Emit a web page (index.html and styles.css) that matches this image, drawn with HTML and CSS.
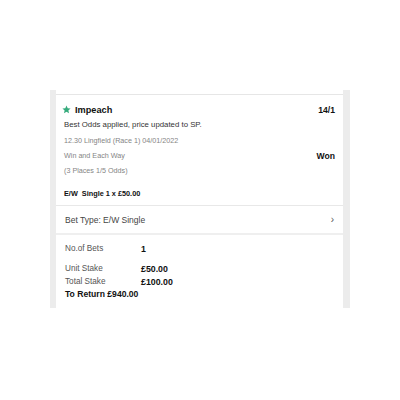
FILE: index.html
```html
<!DOCTYPE html>
<html lang="en">
<head>
  <meta charset="UTF-8" />
  <title>Bet Receipt</title>
  <link rel="stylesheet" href="styles.css">
</head>
<body>
  <div class="frame">
    <div class="card">
      <div class="cap"></div>

      <div class="selection">
        <div class="row title-row">
          <span class="runner">
            <svg class="star" width="9" height="9" viewBox="0 0 24 24"><path d="M12 1.5l3.2 7.1 7.6.7-5.8 5.1 1.8 7.6L12 18l-6.8 4 1.8-7.6L1.2 9.3l7.6-.7z" fill="#35ab7c"/></svg>
            Impeach
          </span>
          <span class="odds">14/1</span>
        </div>
        <div class="row message">Best Odds applied, price updated to SP.</div>
        <div class="row meta">12.30 Lingfield (Race 1) 04/01/2022</div>
        <div class="row meta market">
          <span>Win and Each Way</span>
          <span class="result">Won</span>
        </div>
        <div class="row meta">(3 Places 1/5 Odds)</div>
        <div class="row stake-line">E/W&nbsp; Single 1 x £50.00</div>
      </div>

      <div class="bet-type">
        <span>Bet Type: E/W Single</span>
        <span class="chevron">&#8250;</span>
      </div>

      <div class="summary">
        <div class="pair first"><span class="label">No.of Bets</span><span class="value">1</span></div>
        <div class="pair gap"><span class="label">Unit Stake</span><span class="value">£50.00</span></div>
        <div class="pair"><span class="label">Total Stake</span><span class="value">£100.00</span></div>
        <div class="to-return">To Return £940.00</div>
      </div>
    </div>
  </div>
</body>
</html>
```

FILE: styles.css
```css
body {
  margin: 0;
  padding-top: 90px;
  background: #fff;
  font-family: "Liberation Sans", Arial, sans-serif;
  color: #1a1a1a;
}
.frame {
  width: 287px;
  margin-left: 50px;
  padding: 0 7px 0 6px;
  background: #ececec;
}
.card {
  background: #fff;
}
.cap {
  height: 4px;
  border-bottom: 1px solid #e6e6e6;
}
.selection {
  padding: 8px 8px 5px 8px;
  border-bottom: 1px solid #e8e8e8;
}
.row {
  display: flex;
  justify-content: space-between;
  align-items: center;
}
.title-row {
  height: 13px;
  font-size: 9.2px;
  font-weight: bold;
  color: #111;
}
.runner {
  display: flex;
  align-items: center;
  gap: 4px;
  margin-left: -2px;
}
.star {
  display: block;
}
.odds {
  font-size: 8.6px;
}
.message {
  height: 16px;
  font-size: 7.8px;
  color: #333;
}
.meta {
  height: 16px;
  font-size: 7.2px;
  color: #858585;
}
.market {
  height: 15px;
}
.market + .meta {
  height: 15px;
}
.result {
  font-size: 8.6px;
  font-weight: bold;
  color: #111;
}
.stake-line {
  height: 14px;
  margin-top: 8px;
  font-size: 7.3px;
  font-weight: bold;
  color: #111;
}
.bet-type {
  display: flex;
  justify-content: space-between;
  align-items: center;
  height: 27px;
  padding: 0 9px 0 9px;
  font-size: 8.5px;
  color: #444;
  border-bottom: 2px solid #efefef;
}
.chevron {
  font-size: 10px;
  color: #555;
}
.summary {
  padding: 7px 9px 7px 9px;
}
.pair {
  display: grid;
  grid-template-columns: 76px auto;
  height: 13px;
  align-items: center;
}
.pair.gap {
  margin-top: 7px;
}
.label {
  font-size: 8.2px;
  color: #555;
}
.value {
  font-size: 8.8px;
  font-weight: bold;
  color: #111;
}
.to-return {
  height: 13px;
  line-height: 13px;
  font-size: 8.6px;
  font-weight: bold;
  color: #111;
}
```
